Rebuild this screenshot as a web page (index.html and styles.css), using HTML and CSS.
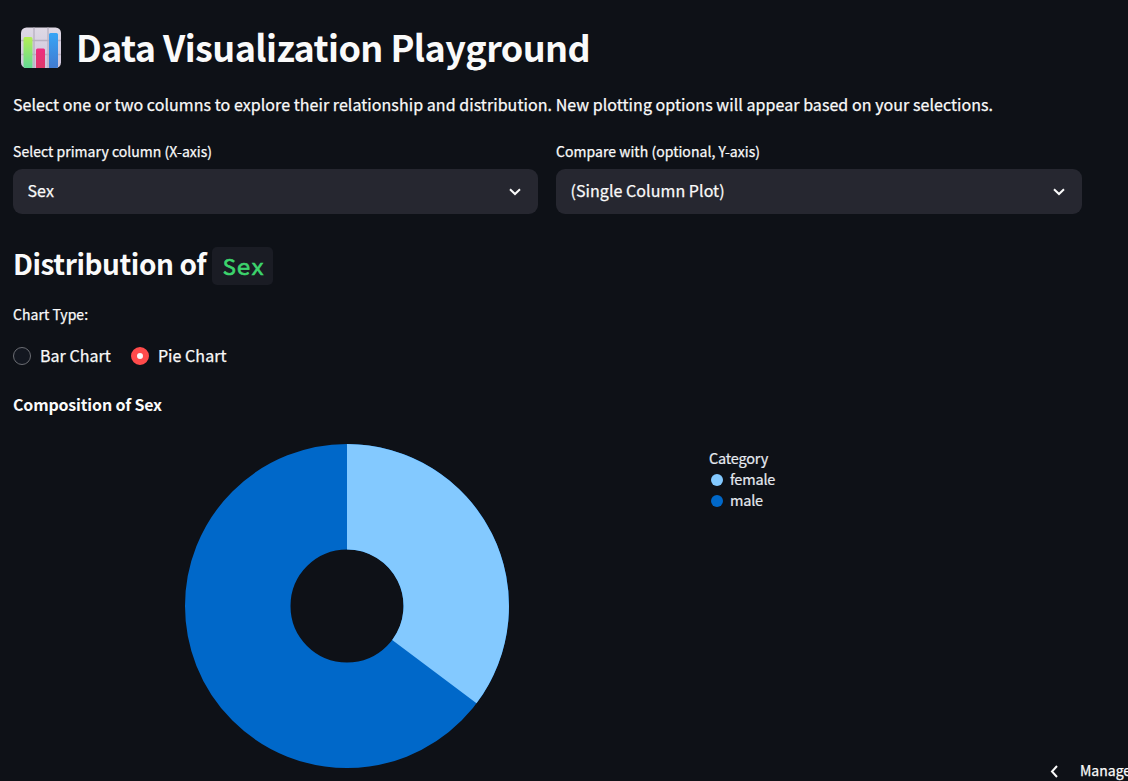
FILE: index.html
```html
<!DOCTYPE html>
<html lang="en">
<head>
<meta charset="utf-8">
<title>Data Visualization Playground</title>
<link rel="stylesheet" href="styles.css">
</head>
<body>
<main class="page">
  <h1 class="title">
    <svg class="title-icon" width="42" height="42" viewBox="0 0 42 42" aria-hidden="true">
      <defs>
        <linearGradient id="paper" x1="0" y1="0" x2="0" y2="1"><stop offset="0" stop-color="#dfd9e5"/><stop offset="1" stop-color="#cdc4db"/></linearGradient>
        <linearGradient id="green" x1="0" y1="0" x2="0" y2="1"><stop offset="0" stop-color="#b5ef55"/><stop offset="1" stop-color="#61d896"/></linearGradient>
        <linearGradient id="pink" x1="0" y1="0" x2="0" y2="1"><stop offset="0" stop-color="#ef2c80"/><stop offset="1" stop-color="#dc3b68"/></linearGradient>
        <linearGradient id="blue" x1="0" y1="0" x2="0" y2="1"><stop offset="0" stop-color="#37a5f6"/><stop offset="1" stop-color="#427ad0"/></linearGradient>
        <clipPath id="sheet"><rect x="1" y="0.5" width="40" height="40.5" rx="5.5"/></clipPath>
      </defs>
      <g clip-path="url(#sheet)">
        <rect width="42" height="42" fill="url(#paper)"/>
        <path d="M14 0V42M28 0V42M0 13.5H42M0 27.5H42" stroke="#b9b1c1" stroke-width="1.3"/>
        <path d="M3.5 42V11.500a1.500 1.500 0 0 1 1.500-1.500h6a1.500 1.500 0 0 1 1.500 1.500V42z" fill="url(#green)"/>
        <path d="M16 42V23a1.500 1.500 0 0 1 1.500-1.500h6a1.500 1.500 0 0 1 1.500 1.500V42z" fill="url(#pink)"/>
        <path d="M29 42V7.500a1.500 1.500 0 0 1 1.500-1.500h6a1.500 1.500 0 0 1 1.500 1.500V42z" fill="url(#blue)"/>
      </g>
    </svg>
    <span>Data Visualization Playground</span>
  </h1>
  <p class="intro"><span>Select one or two columns to explore their relationship and distribution. New plotting options will appear based on your selections.</span></p>
  <div class="fields">
    <div class="field">
      <div class="label"><span>Select primary column (X-axis)</span></div>
      <div class="select"><span>Sex</span><svg class="chevron" width="14" height="10" viewBox="0 0 14 10"><path d="M2 2.200L7 7L12 2.200"/></svg></div>
    </div>
    <div class="field">
      <div class="label"><span>Compare with (optional, Y-axis)</span></div>
      <div class="select"><span>(Single Column Plot)</span><svg class="chevron" width="14" height="10" viewBox="0 0 14 10"><path d="M2 2.200L7 7L12 2.200"/></svg></div>
    </div>
  </div>
  <h2 class="subtitle"><span>Distribution of</span><code class="code">Sex</code></h2>
  <div class="label chart-type"><span>Chart Type:</span></div>
  <div class="radios">
    <div class="radio"><i class="dot"></i><span>Bar Chart</span></div>
    <div class="radio"><i class="dot dot-on"></i><span>Pie Chart</span></div>
  </div>
  <h3 class="chart-title"><span>Composition of Sex</span></h3>
  <div class="chart">
    <svg class="pie" width="326" height="326" viewBox="-163 -163 326 326">
      <circle r="109.250" fill="none" stroke="#0068c9" stroke-width="105.500"/>
      <path d="M0-162A162 162 0 0 1 129.500 97.300L45.200 33.900A56.500 56.500 0 0 0 0-56.500z" fill="#83c9ff"/>
    </svg>
    <div class="legend">
      <div class="legend-title">Category</div>
      <div class="legend-row"><i class="swatch female"></i><span>female</span></div>
      <div class="legend-row"><i class="swatch male"></i><span>male</span></div>
    </div>
  </div>
</main>
<div class="manage"><svg width="10" height="14" viewBox="0 0 10 14"><path d="M8 2L3 7.500L8 13"/></svg><span>Manage</span></div>
</body>
</html>
```
FILE: styles.css
```css
* { box-sizing: border-box; }
html, body { margin: 0; height: 781px; overflow: hidden; background: #0e1117; }
body {
  color: #fafafa;
  font-family: "Source Sans Pro", "Noto Sans CJK SC", "Noto Sans", sans-serif;
  font-size: 16px;
  font-weight: 400;
  -webkit-text-stroke: 0.25px currentColor;
}
span { white-space: nowrap; }
.page { width: 1082px; padding: 20px 0 0 13px; }
.title { display: flex; align-items: center; height: 56px; margin: 0; padding-left: 7px; font-size: 36px; font-weight: 700; line-height: 56px; letter-spacing: -0.6px; -webkit-text-stroke: 0; }
.title span { padding-bottom: 5px; }
.title-icon { margin-right: 14px; }
.intro { margin: 14px 0 0; height: 28px; line-height: 28px; letter-spacing: 0.055px; }
.fields { display: grid; grid-template-columns: 525px 526px; gap: 18px; margin-top: 23px; }
.label { height: 20px; line-height: 20px; font-size: 14px; letter-spacing: 0.04px; }
.select { display: flex; align-items: center; justify-content: space-between; height: 45px; margin-top: 8px; padding: 0 16px 0 14.5px; border-radius: 9px; background: #262730; letter-spacing: 0.06px; }
.select span { padding-bottom: 3px; }
.chevron, .manage svg { fill: none; stroke: #fafafa; stroke-width: 2; }
.subtitle { display: flex; align-items: center; height: 38px; margin: 33px 0 0; font-size: 28px; font-weight: 700; letter-spacing: -0.45px; -webkit-text-stroke: 0; }
.subtitle span { padding-bottom: 7px; }
.code { height: 38px; margin-left: 6px; width: 61px; padding-left: 10px; border-radius: 5px; background: #1a1c24; color: #3dd56d; font: 400 24px/40px "Source Code Pro", "Noto Sans Mono CJK SC", "DejaVu Sans Mono", monospace; letter-spacing: 0; -webkit-text-stroke: 0.7px currentColor; }
.code { font-size: 23.5px; }
.chart-type { margin-top: 19px; }
.radios { display: flex; gap: 20px; height: 28px; margin-top: 18px; }
.radio { display: flex; align-items: center; gap: 9px; letter-spacing: 0.05px; }
.radio span { padding-bottom: 2px; }
.dot { width: 18px; height: 18px; border: 1px solid #6b6d73; border-radius: 50%; background: #131720; }
.dot-on { border: 6px solid #ff4b4b; background: #fafafa; }
.chart-title { height: 28px; margin: 20px 0 0; font-size: 16px; line-height: 28px; letter-spacing: -0.17px; -webkit-text-stroke: 0; }
.chart { display: flex; margin-top: 25px; padding-left: 171px; }
.legend { margin: 5px 0 0 199px; color: #e6eaf1; font-size: 14.5px; letter-spacing: -0.2px; -webkit-text-stroke: 0.2px currentColor; }
.legend-title { height: 22px; line-height: 20px; }
.legend-row { display: flex; align-items: center; height: 20.5px; gap: 7px; padding-left: 2px; }
.legend-row span { padding-bottom: 3px; }
.swatch { width: 12px; height: 12px; border-radius: 50%; }
.female { background: #83c9ff; }
.male { background: #0068c9; }
.manage { position: absolute; left: 1049px; top: 761px; display: flex; align-items: center; gap: 21px; height: 20px; font-size: 14px; }
.manage span { padding-bottom: 2px; }
```
